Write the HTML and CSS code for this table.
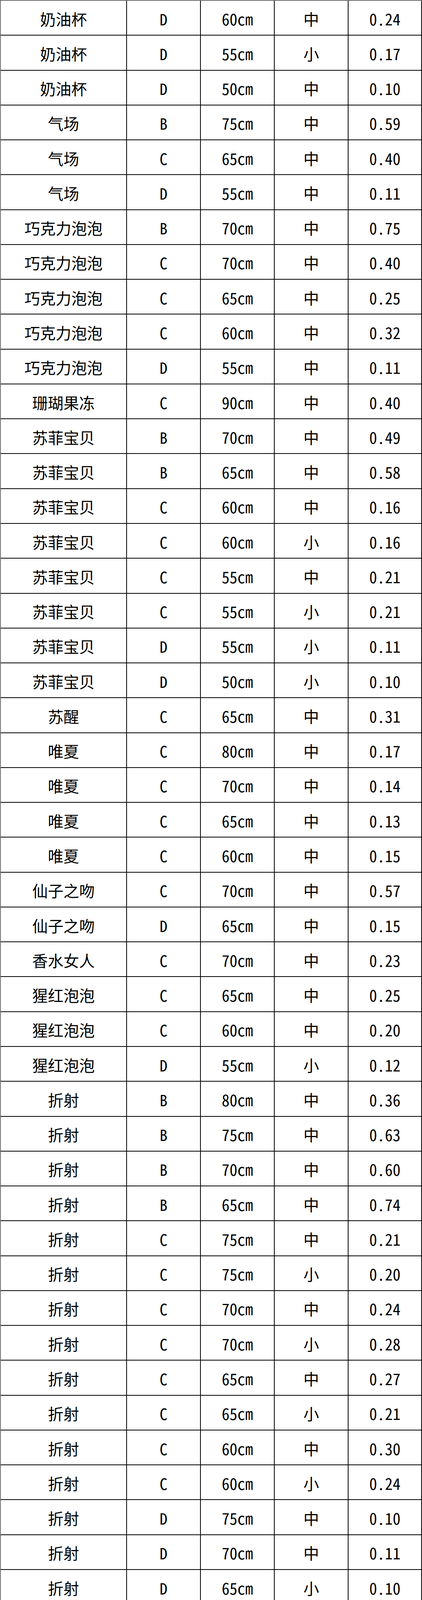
FILE: index.html
```html
<!DOCTYPE html>
<html lang="zh">
<head>
<meta charset="utf-8">
<title>尺寸表</title>
<link rel="stylesheet" href="styles.css">
</head>
<body>
<div class="sheet">
<div class="c">奶油杯</div><div class="c">D</div><div class="c">60cm</div><div class="c">中</div><div class="c">0.24</div>
<div class="c">奶油杯</div><div class="c">D</div><div class="c">55cm</div><div class="c">小</div><div class="c">0.17</div>
<div class="c">奶油杯</div><div class="c">D</div><div class="c">50cm</div><div class="c">中</div><div class="c">0.10</div>
<div class="c">气场</div><div class="c">B</div><div class="c">75cm</div><div class="c">中</div><div class="c">0.59</div>
<div class="c">气场</div><div class="c">C</div><div class="c">65cm</div><div class="c">中</div><div class="c">0.40</div>
<div class="c">气场</div><div class="c">D</div><div class="c">55cm</div><div class="c">中</div><div class="c">0.11</div>
<div class="c">巧克力泡泡</div><div class="c">B</div><div class="c">70cm</div><div class="c">中</div><div class="c">0.75</div>
<div class="c">巧克力泡泡</div><div class="c">C</div><div class="c">70cm</div><div class="c">中</div><div class="c">0.40</div>
<div class="c">巧克力泡泡</div><div class="c">C</div><div class="c">65cm</div><div class="c">中</div><div class="c">0.25</div>
<div class="c">巧克力泡泡</div><div class="c">C</div><div class="c">60cm</div><div class="c">中</div><div class="c">0.32</div>
<div class="c">巧克力泡泡</div><div class="c">D</div><div class="c">55cm</div><div class="c">中</div><div class="c">0.11</div>
<div class="c">珊瑚果冻</div><div class="c">C</div><div class="c">90cm</div><div class="c">中</div><div class="c">0.40</div>
<div class="c">苏菲宝贝</div><div class="c">B</div><div class="c">70cm</div><div class="c">中</div><div class="c">0.49</div>
<div class="c">苏菲宝贝</div><div class="c">B</div><div class="c">65cm</div><div class="c">中</div><div class="c">0.58</div>
<div class="c">苏菲宝贝</div><div class="c">C</div><div class="c">60cm</div><div class="c">中</div><div class="c">0.16</div>
<div class="c">苏菲宝贝</div><div class="c">C</div><div class="c">60cm</div><div class="c">小</div><div class="c">0.16</div>
<div class="c">苏菲宝贝</div><div class="c">C</div><div class="c">55cm</div><div class="c">中</div><div class="c">0.21</div>
<div class="c">苏菲宝贝</div><div class="c">C</div><div class="c">55cm</div><div class="c">小</div><div class="c">0.21</div>
<div class="c">苏菲宝贝</div><div class="c">D</div><div class="c">55cm</div><div class="c">小</div><div class="c">0.11</div>
<div class="c">苏菲宝贝</div><div class="c">D</div><div class="c">50cm</div><div class="c">小</div><div class="c">0.10</div>
<div class="c">苏醒</div><div class="c">C</div><div class="c">65cm</div><div class="c">中</div><div class="c">0.31</div>
<div class="c">唯夏</div><div class="c">C</div><div class="c">80cm</div><div class="c">中</div><div class="c">0.17</div>
<div class="c">唯夏</div><div class="c">C</div><div class="c">70cm</div><div class="c">中</div><div class="c">0.14</div>
<div class="c">唯夏</div><div class="c">C</div><div class="c">65cm</div><div class="c">中</div><div class="c">0.13</div>
<div class="c">唯夏</div><div class="c">C</div><div class="c">60cm</div><div class="c">中</div><div class="c">0.15</div>
<div class="c">仙子之吻</div><div class="c">C</div><div class="c">70cm</div><div class="c">中</div><div class="c">0.57</div>
<div class="c">仙子之吻</div><div class="c">D</div><div class="c">65cm</div><div class="c">中</div><div class="c">0.15</div>
<div class="c">香水女人</div><div class="c">C</div><div class="c">70cm</div><div class="c">中</div><div class="c">0.23</div>
<div class="c">猩红泡泡</div><div class="c">C</div><div class="c">65cm</div><div class="c">中</div><div class="c">0.25</div>
<div class="c">猩红泡泡</div><div class="c">C</div><div class="c">60cm</div><div class="c">中</div><div class="c">0.20</div>
<div class="c">猩红泡泡</div><div class="c">D</div><div class="c">55cm</div><div class="c">小</div><div class="c">0.12</div>
<div class="c">折射</div><div class="c">B</div><div class="c">80cm</div><div class="c">中</div><div class="c">0.36</div>
<div class="c">折射</div><div class="c">B</div><div class="c">75cm</div><div class="c">中</div><div class="c">0.63</div>
<div class="c">折射</div><div class="c">B</div><div class="c">70cm</div><div class="c">中</div><div class="c">0.60</div>
<div class="c">折射</div><div class="c">B</div><div class="c">65cm</div><div class="c">中</div><div class="c">0.74</div>
<div class="c">折射</div><div class="c">C</div><div class="c">75cm</div><div class="c">中</div><div class="c">0.21</div>
<div class="c">折射</div><div class="c">C</div><div class="c">75cm</div><div class="c">小</div><div class="c">0.20</div>
<div class="c">折射</div><div class="c">C</div><div class="c">70cm</div><div class="c">中</div><div class="c">0.24</div>
<div class="c">折射</div><div class="c">C</div><div class="c">70cm</div><div class="c">小</div><div class="c">0.28</div>
<div class="c">折射</div><div class="c">C</div><div class="c">65cm</div><div class="c">中</div><div class="c">0.27</div>
<div class="c">折射</div><div class="c">C</div><div class="c">65cm</div><div class="c">小</div><div class="c">0.21</div>
<div class="c">折射</div><div class="c">C</div><div class="c">60cm</div><div class="c">中</div><div class="c">0.30</div>
<div class="c">折射</div><div class="c">C</div><div class="c">60cm</div><div class="c">小</div><div class="c">0.24</div>
<div class="c">折射</div><div class="c">D</div><div class="c">75cm</div><div class="c">中</div><div class="c">0.10</div>
<div class="c">折射</div><div class="c">D</div><div class="c">70cm</div><div class="c">中</div><div class="c">0.11</div>
<div class="c">折射</div><div class="c">D</div><div class="c">65cm</div><div class="c">小</div><div class="c">0.10</div>
<div class="c">折射</div><div class="c">D</div><div class="c">60cm</div><div class="c">小</div><div class="c">0.12</div>
<div class="c">折射</div><div class="c">D</div><div class="c">60cm</div><div class="c">中</div><div class="c">0.11</div>
<div class="c">折射</div><div class="c">D</div><div class="c">55cm</div><div class="c">小</div><div class="c">0.10</div>
<div class="c">折射</div><div class="c">D</div><div class="c">50cm</div><div class="c">小</div><div class="c">0.10</div>
<div class="c">猪小姐</div><div class="c">D</div><div class="c">65cm</div><div class="c">中</div><div class="c">0.10</div>
<div class="c">紫霞仙子</div><div class="c">A</div><div class="c">80cm</div><div class="c">大</div><div class="c">0.82</div>
<div class="c">紫霞仙子</div><div class="c">A</div><div class="c">70cm</div><div class="c">中</div><div class="c">0.84</div>
<div class="c">紫霞仙子</div><div class="c">A+</div><div class="c">75cm</div><div class="c">小</div><div class="c">0.56</div>
<div class="c">紫霞仙子</div><div class="c">A+</div><div class="c">70cm</div><div class="c">小</div><div class="c">0.52</div>
<div class="c">紫霞仙子</div><div class="c">B+</div><div class="c">65cm</div><div class="c">小</div><div class="c">0.56</div>
<div class="c">紫霞仙子</div><div class="c">B+</div><div class="c">65cm</div><div class="c">中</div><div class="c">0.54</div>
<div class="c">紫霞仙子</div><div class="c">C</div><div class="c">65cm</div><div class="c">中</div><div class="c">0.44</div>
<div class="c">紫霞仙子</div><div class="c">C</div><div class="c">60cm</div><div class="c">中</div><div class="c">0.46</div>
<div class="c">紫霞仙子</div><div class="c">C+</div><div class="c">60cm</div><div class="c">中</div><div class="c">0.60</div>
<div class="c">紫霞仙子</div><div class="c">C+</div><div class="c">55cm</div><div class="c">小</div><div class="c">0.62</div>
<div class="c">紫霞仙子</div><div class="c">D</div><div class="c">50cm</div><div class="c">中</div><div class="c">0.17</div>
</div>
</body>
</html>
```

FILE: styles.css
```css
html, body {
  margin: 0;
  padding: 0;
  background: #ffffff;
}

.sheet {
  box-sizing: border-box;
  width: 1080px;
  height: 5537px;
  display: grid;
  grid-template-columns: 323px 189px 189px 189px 188px;
  grid-auto-rows: calc((5537px - 2px) / 62);
  border-top: 2px solid #6e6e6e;
  border-left: 2px solid #6e6e6e;
  font-family: "Noto Sans Mono CJK SC", "Noto Sans CJK SC", "DejaVu Sans Mono", monospace;
  font-size: 40px;
  color: #000000;
}

.c {
  box-sizing: border-box;
  display: flex;
  align-items: center;
  justify-content: center;
  padding-top: 4px;
  border-right: 2px solid #000000;
  border-bottom: 2px solid #000000;
  line-height: 1;
  white-space: nowrap;
}
```
